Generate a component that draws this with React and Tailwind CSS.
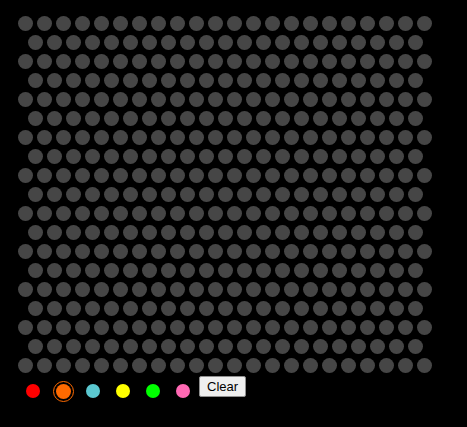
import React, { useState } from "react";

const ROWS = 19;
const colors = ["#ff0000", "#ff6a00", "#5bc8d0", "#ffff00", "#00ff00", "#ff69b4"];

const Board = () => {
  const rows = [];
  for (let r = 0; r < ROWS; r++) {
    const odd = r % 2 === 1;
    const count = odd ? 21 : 22;
    rows.push(
      <div key={r} className={odd ? "flex pl-[10px]" : "flex"}>
        {Array.from({ length: count }).map((_, i) => (
          <div key={i} className="m-[2px] h-[15px] w-[15px] shrink-0 rounded-full bg-[#464646]" />
        ))}
      </div>
    );
  }
  return <div className="flex flex-col">{rows}</div>;
};

export default function App() {
  const [picked, setPicked] = useState(1);
  return (
    <div className="h-[427px] w-full bg-black pl-[16px] pt-[14px]" style={{ fontFamily: '"Liberation Sans", Arial, sans-serif' }}>
      <Board />
      <div className="mt-[1px] flex items-start pl-[2px]">
        {colors.map((c, i) => (
          <div key={c} className="flex h-[30px] w-[30px] justify-center pt-[8px]" onClick={() => setPicked(i)}>
            <div
              className={
                i === picked
                  ? "h-[15px] w-[15px] rounded-full outline outline-1 outline-offset-[2px] outline-[#ff6a00]"
                  : "h-[14px] w-[14px] rounded-full"
              }
              style={{ backgroundColor: c }}
            />
          </div>
        ))}
        <button className="ml-[1px] h-[21px] rounded-[2px] border border-[#8f8f8f] bg-[#efefef] px-[7px] text-[13px] leading-none text-black">
          Clear
        </button>
      </div>
    </div>
  );
}
